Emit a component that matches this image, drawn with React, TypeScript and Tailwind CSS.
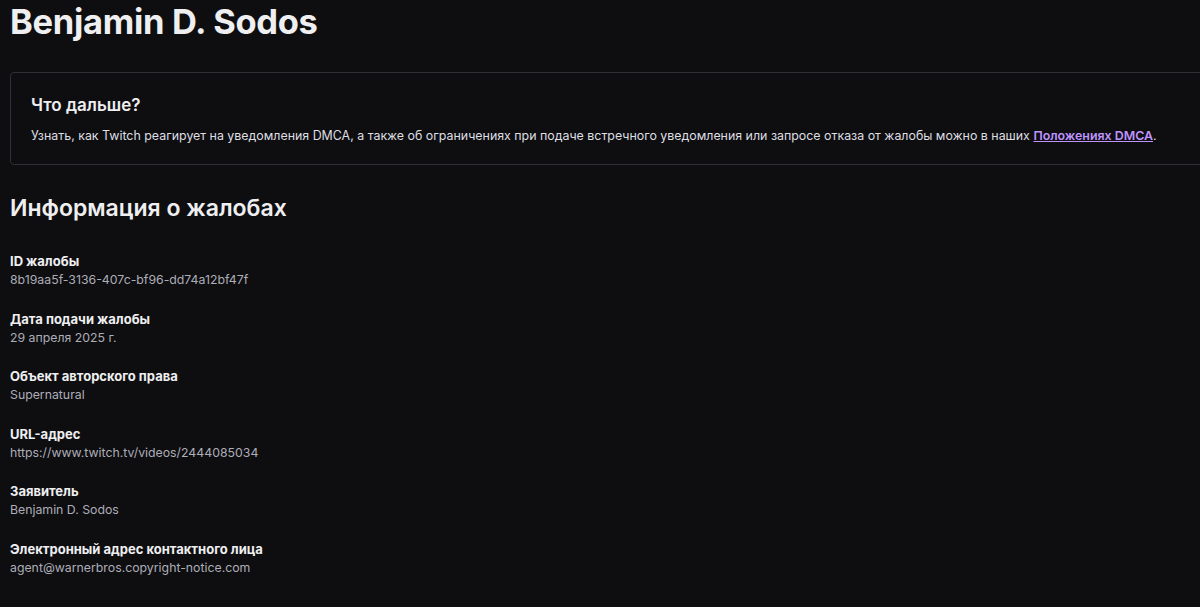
const items = [
    { label: "ID жалобы", value: "8b19aa5f-3136-407c-bf96-dd74a12bf47f" },
    { label: "Дата подачи жалобы", value: "29 апреля 2025 г." },
    { label: "Объект авторского права", value: "Supernatural" },
    { label: "URL-адрес", value: "https://www.twitch.tv/videos/2444085034" },
    { label: "Заявитель", value: "Benjamin D. Sodos" },
    { label: "Электронный адрес контактного лица", value: "agent@warnerbros.copyright-notice.com" },
];

const App = () => {
    return (
        <div className="h-[607px] w-[1200px] overflow-hidden bg-[#0e0e10] text-[#efeff1] font-['Inter',sans-serif]">
            <div className="pl-[10px]">
                <h1 className="text-[34.5px] leading-[44px] font-bold tracking-[-0.3px]">Benjamin D. Sodos</h1>
                <div className="mt-[28px] w-[1220px] h-[93px] border border-[#2f2f35] rounded-[4px] px-[20px] pt-[20px]">
                    <h3 className="text-[17px] leading-[24px] font-semibold">Что дальше?</h3>
                    <p className="mt-[10px] text-[12.4px] leading-[18px] text-[#dedee3] whitespace-nowrap">
                        Узнать, как Twitch реагирует на уведомления DMCA, а также об ограничениях при подаче встречного уведомления или запросе отказа от жалобы можно в наших{" "}
                        <a href="#" className="text-[#bf94ff] font-semibold underline">Положениях DMCA</a>.
                    </p>
                </div>
                <h2 className="mt-[27px] text-[23px] leading-[32px] font-semibold">Информация о жалобах</h2>
                <div className="mt-[28px] flex flex-col gap-[20.6px]">
                    {
                        items.map((item, index) => (
                            <div key={index}>
                                <div className="text-[13px] leading-[18px] font-bold">{item.label}</div>
                                <div className="text-[12.3px] leading-[19px] text-[#adadb8]">{item.value}</div>
                            </div>
                        ))
                    }
                </div>
            </div>
        </div>
    );
}

export default App;
